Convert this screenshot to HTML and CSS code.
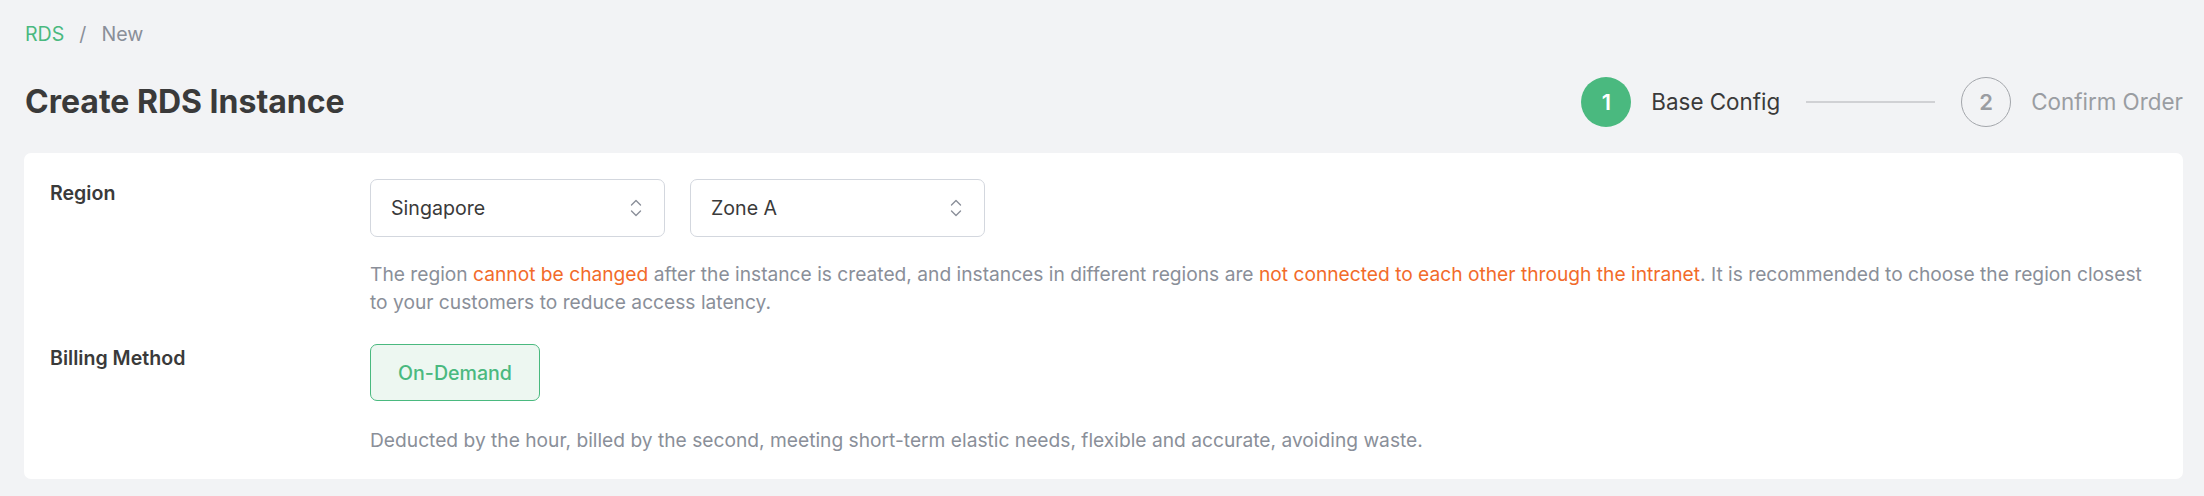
FILE: index.html
```html
<!DOCTYPE html>
<html lang="en">
<head>
<meta charset="utf-8">
<title>Create RDS Instance</title>
<link rel="stylesheet" href="styles.css">
</head>
<body>
<div class="page">
  <nav class="breadcrumb">
    <span class="crumb-link">RDS</span>
    <span class="crumb-sep">/</span>
    <span class="crumb-current">New</span>
  </nav>
  <header class="header">
    <h1 class="title">Create RDS Instance</h1>
    <div class="steps">
      <div class="step step-active">
        <span class="step-dot">1</span>
        <span class="step-label">Base Config</span>
      </div>
      <span class="step-line"></span>
      <div class="step step-wait">
        <span class="step-dot">2</span>
        <span class="step-label">Confirm Order</span>
      </div>
    </div>
  </header>
  <section class="card">
    <div class="row">
      <div class="label">Region</div>
      <div class="content">
        <div class="selects">
          <div class="select">
            <span class="select-value">Singapore</span>
            <svg class="chev" viewBox="0 0 12 18" width="12" height="18"><path d="M1.5 6 L6 1.5 L10.5 6 M1.5 12 L6 16.5 L10.5 12" fill="none" stroke="#8a8f99" stroke-width="1.4" stroke-linecap="round" stroke-linejoin="round"/></svg>
          </div>
          <div class="select">
            <span class="select-value">Zone A</span>
            <svg class="chev" viewBox="0 0 12 18" width="12" height="18"><path d="M1.5 6 L6 1.5 L10.5 6 M1.5 12 L6 16.5 L10.5 12" fill="none" stroke="#8a8f99" stroke-width="1.4" stroke-linecap="round" stroke-linejoin="round"/></svg>
          </div>
        </div>
        <p class="desc desc-region">The region <span class="warn">cannot be changed</span> after the instance is created, and instances in different regions are <span class="warn">not connected to each other through the intranet</span>. It is recommended to choose the region closest to your customers to reduce access latency.</p>
      </div>
    </div>
    <div class="row">
      <div class="label">Billing Method</div>
      <div class="content">
        <div class="options">
          <button class="option option-selected" type="button">On-Demand</button>
        </div>
        <p class="desc desc-billing">Deducted by the hour, billed by the second, meeting short-term elastic needs, flexible and accurate, avoiding waste.</p>
      </div>
    </div>
  </section>
</div>
</body>
</html>
```
FILE: styles.css
```css
* {
  box-sizing: border-box;
}

html, body {
  margin: 0;
  padding: 0;
  background: #f2f3f5;
}

body {
  font-family: Inter, "Noto Sans", "Liberation Sans", sans-serif;
  font-size: 19.6px;
  line-height: 28px;
  color: #3a3a3a;
}

.page {
  padding: 20px 21px 0 24px;
}

.breadcrumb {
  display: flex;
  align-items: center;
  height: 28px;
  padding-left: 1px;
}

.crumb-link {
  color: #4ab97f;
}

.crumb-sep {
  color: #8a8f99;
  margin: 0 15px;
}

.crumb-current {
  color: #8a8f99;
}

.header {
  display: flex;
  align-items: center;
  justify-content: space-between;
  height: 50px;
  margin-top: 29px;
}

.title {
  margin: 0;
  padding-left: 1px;
  font-size: 32px;
  line-height: 40px;
  font-weight: 700;
  color: #3a3a3a;
}

.steps {
  display: flex;
  align-items: center;
}

.step {
  display: flex;
  align-items: center;
  gap: 20px;
}

.step-dot {
  width: 50px;
  height: 50px;
  border-radius: 50%;
  display: flex;
  align-items: center;
  justify-content: center;
  font-size: 22px;
  font-weight: 600;
}

.step-label {
  font-size: 22.4px;
  line-height: 30px;
}

.step-active .step-dot {
  background: #4ab97f;
  color: #ffffff;
}

.step-active .step-label {
  color: #3a3a3a;
}

.step-wait .step-dot {
  border: 1px solid #a3a6ab;
  color: #9a9da2;
}

.step-wait .step-label {
  color: #9a9da2;
}

.step-line {
  width: 129px;
  height: 2px;
  background: #d0d1d4;
  margin: 0 26px;
}

.card {
  margin-top: 26px;
  background: #ffffff;
  border-radius: 7px;
  padding: 26px 26px 25px 26px;
}

.row {
  display: grid;
  grid-template-columns: 320px 1fr;
  align-items: start;
}

.row + .row {
  margin-top: 28px;
}

.label {
  justify-self: start;
  font-weight: 600;
  color: #3a3a3a;
}

.selects {
  display: flex;
  gap: 25px;
}

.select {
  width: 295px;
  height: 58px;
  border: 1px solid #d3d7de;
  border-radius: 7px;
  display: flex;
  align-items: center;
  justify-content: space-between;
  padding: 0 22px 0 20px;
  color: #3a3a3a;
}

.select-value {
  line-height: 24px;
}

.chev {
  display: block;
}

.desc {
  margin: 0;
  font-size: 19.2px;
  color: #8a8f99;
}

.desc-region {
  margin-top: 23px;
}

.desc-billing {
  margin-top: 25px;
}

.warn {
  color: #f26b2a;
}

.options {
  display: flex;
}

.option {
  width: 170px;
  height: 57px;
  border-radius: 7px;
  font-family: inherit;
  font-size: 19.6px;
  font-weight: 500;
  padding: 0;
  cursor: pointer;
}

.option-selected {
  border: 1px solid #4ab97f;
  background: #edf7f1;
  color: #4ab97f;
}
```
